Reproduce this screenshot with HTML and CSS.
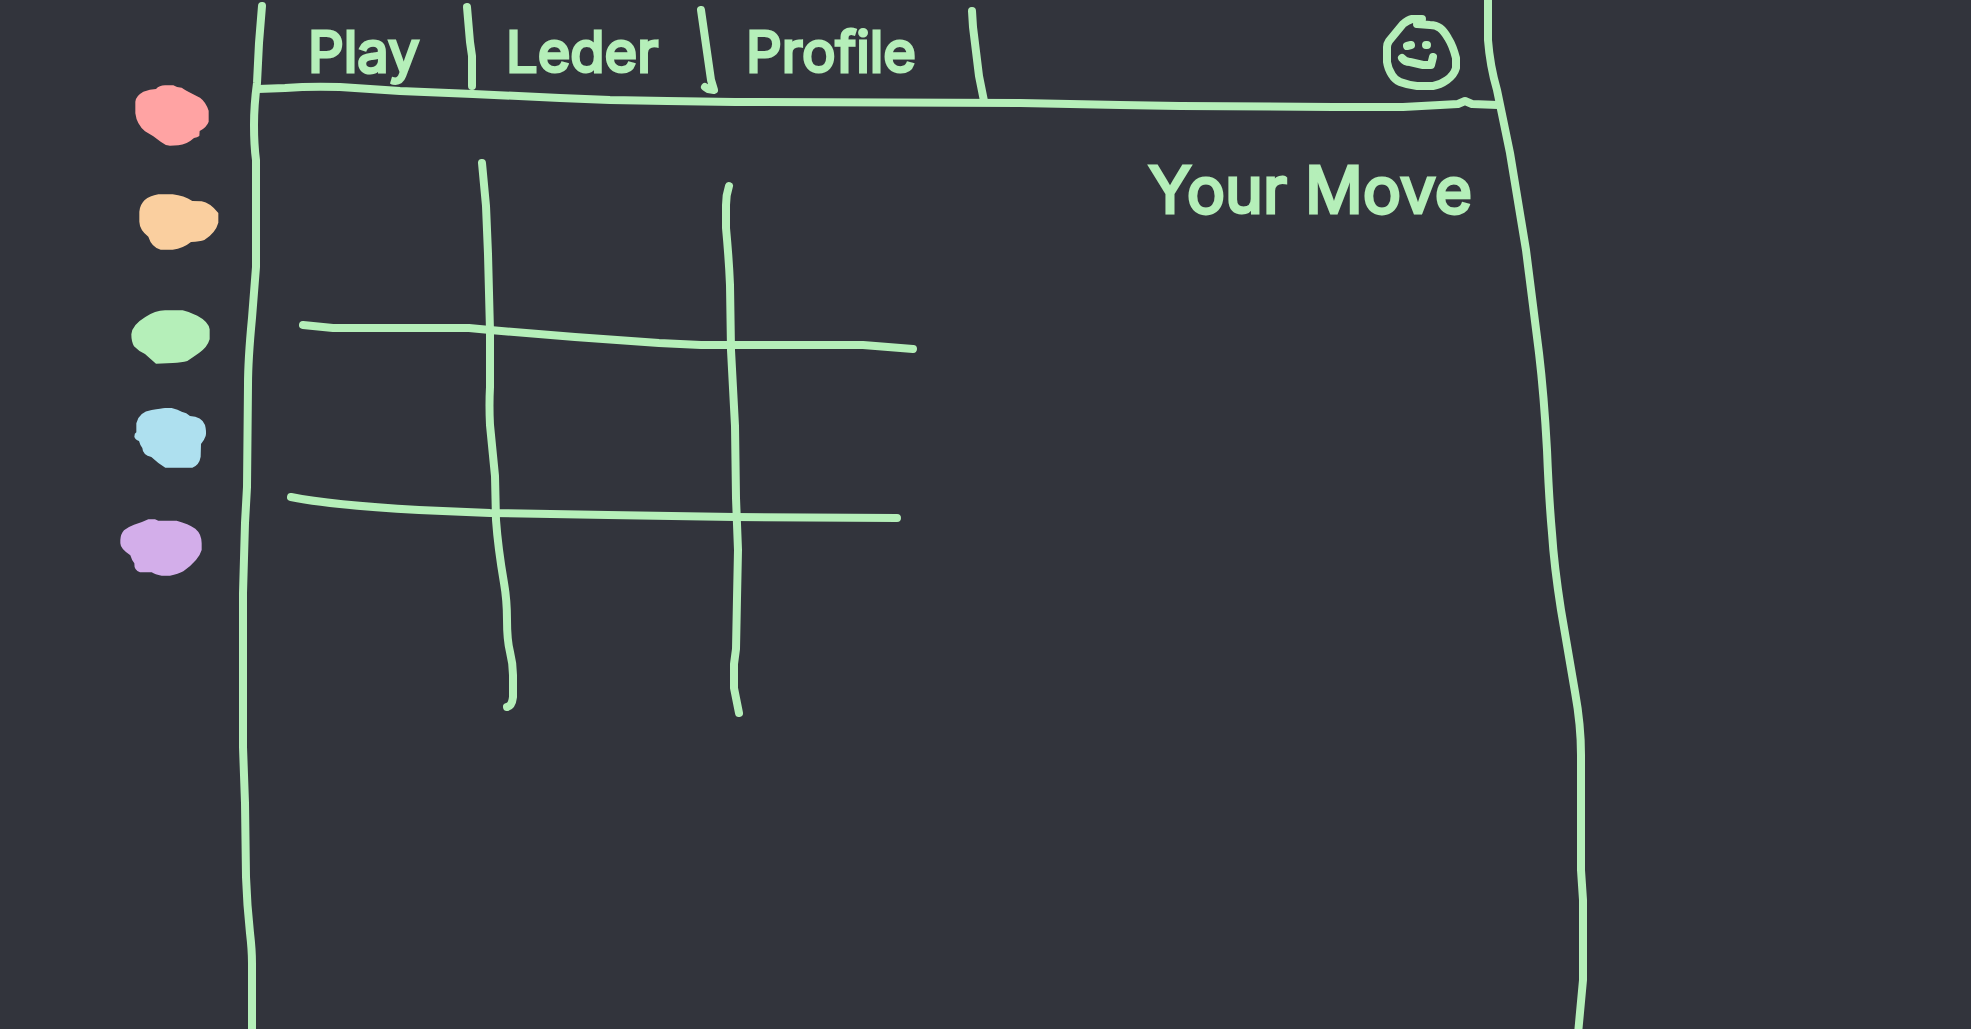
FILE: index.html
```html
<!DOCTYPE html>
<html lang="en">
<head>
<meta charset="utf-8">
<meta name="viewport" content="width=device-width, initial-scale=1">
<title>Tic-tac-toe</title>
<link rel="stylesheet" href="styles.css">
</head>
<body>
<div class="app">
  <aside class="palette" aria-label="Colours">
    <button class="swatch swatch-red" type="button" aria-label="Red">
      <svg viewBox="0 -30 360 330"><path d="M76 95Q77 78 100 65Q120 58 138 57Q148 46 165 46L190 46Q200 53 215 53Q225 60 235 65L270 83Q287 95 296 122L296 155Q290 172 269 183L268 198Q262 203 252 204Q230 224 205 226L180 227Q165 226 152 215L130 199L105 184Q80 163 76 130Z"/></svg>
    </button>
    <button class="swatch swatch-orange" type="button" aria-label="Orange">
      <svg viewBox="0 300 360 330"><path d="M88 425Q92 382 145 373L188 373Q222 377 247 393L275 394Q300 398 325 429L325 458Q317 488 283 510Q270 515 243 516Q220 535 188 539L152 539Q125 532 115 500Q89 480 88 455Z"/></svg>
    </button>
    <button class="swatch swatch-green" type="button" aria-label="Green">
      <svg viewBox="0 630 360 330"><path d="M64 793Q66 765 106 741Q135 722 165 721L218 721Q240 726 262 737Q296 755 299 778L299 808Q292 832 268 848Q248 862 232 873Q215 878 188 879L138 881Q125 870 105 852Q85 843 72 829Q64 815 64 793Z"/></svg>
    </button>
    <button class="swatch swatch-blue" type="button" aria-label="Blue">
      <svg viewBox="0 30 360 330"><path d="M79 130Q86 96 125 90Q155 85 165 84L185 84Q205 89 215 95Q230 98 240 108Q275 109 285 135Q290 155 287 168Q283 180 273 192L272 230Q268 255 247 263L166 263Q145 251 124 231Q98 225 97 204Q90 195 87 183Q75 178 73 170Q73 160 79 157Z"/></svg>
    </button>
    <button class="swatch swatch-purple" type="button" aria-label="Purple">
      <svg viewBox="0 360 360 330"><path d="M31 480Q32 462 42 451Q55 440 72 434Q95 428 115 418L135 418L145 422L200 422Q235 431 256 446Q275 462 275 490L275 510Q267 540 220 574Q205 582 180 587L155 587Q135 584 125 577L90 577Q72 572 73 550Q65 540 61 526Q31 506 31 490Z"/></svg>
    </button>
  </aside>

  <div class="frame">
    <svg class="outline" viewBox="236 0 1352 1029" preserveAspectRatio="none" aria-hidden="true">
      <path d="M262 6L259 43L257 83Q254 105 254 125Q254 145 256 160L256 267L252 318Q248 360 248 385L247 487L245 523L243 593L243 747L245 803L246 877Q247 905 250 933Q252 950 252 963L252 1034"/>
      <path d="M258 89L285 88Q310 86 340 87L400 91L473 94L560 98L610 100L667 101L735 102L1020 103L1120 105L1180 106L1333 107L1403 107L1440 105L1458 104L1465 101L1472 104L1498 105"/>
      <path d="M1488 -4L1488 40Q1490 66 1497 90L1510 153L1526 250L1539 353Q1544 395 1547 450Q1549 500 1552 533Q1554 565 1561 610L1575 692Q1581 725 1581 755L1581 870L1583 900L1583 980L1578 1034"/>
    </svg>

    <header class="header">
      <nav class="tabs">
        <a class="tab tab-play" href="#play">Play</a>
        <svg class="divider" viewBox="458 0 24 112" aria-hidden="true"><path d="M467 7L470 42L472 56L472 86"/></svg>
        <a class="tab tab-leader" href="#leader">Leder</a>
        <svg class="divider" viewBox="698 0 24 112" aria-hidden="true"><path d="M701 10L706 45L711 80L714 90L708 89L705 87"/></svg>
        <a class="tab tab-profile" href="#profile">Profile</a>
        <svg class="divider" viewBox="968 0 24 112" aria-hidden="true"><path d="M972 11L973 27L979 76L984 101"/></svg>
      </nav>
      <button class="avatar" type="button" aria-label="Account">
        <svg viewBox="1376 8 92 92">
          <path d="M1422 19L1412 19Q1408 20 1403 24L1389 41Q1387 44 1387 47L1387 62Q1388 69 1392 75Q1395 80 1400 82Q1408 85 1417 86L1433 86Q1440 85 1447 80Q1454 75 1456 68L1456 58Q1453 46 1448 38Q1444 31 1440 28Q1436 25 1430 25L1417 24"/>
          <path d="M1407 46L1411 45M1426 45L1427 45M1402 58Q1405 62 1410 62L1423 65L1431 65L1433 57"/>
        </svg>
      </button>
    </header>

    <main class="game">
      <svg class="board" viewBox="280 150 660 580" role="img" aria-label="Empty tic-tac-toe board">
        <path d="M482 163L486 206L488 254L490 331L490 387Q489 405 490 425L495 476L496 520Q498 548 504 583Q507 600 507 620Q507 640 510 652Q513 664 513 675L513 697Q512 706 507 707"/>
        <path d="M729 186Q726 195 726 205L726 228Q729 260 730 285L731 350L735 426L736 498L738 550L737 598L736 649L734 664L734 688L739 713"/>
        <path d="M303 325L333 328L469 328L490 330L575 337L659 343L701 345L863 345L913 349"/>
        <path d="M291 497Q330 505 419 510L490 513L608 515L735 517L897 518"/>
      </svg>
      <p class="status">Your Move</p>
    </main>
  </div>
</div>
</body>
</html>
```
FILE: styles.css
```css
:root {
  --ground: #32343c;
  --ink: #b5efb9;
}

* {
  box-sizing: border-box;
}

body {
  margin: 0;
  background: var(--ground);
  color: var(--ink);
  font-family: Inter, "Liberation Sans", sans-serif;
}

.app {
  display: grid;
  grid-template-columns: 236px minmax(0, 1352fr) minmax(0, 383fr);
  min-height: 100vh;
}

button {
  padding: 0;
  border: 0;
  background: none;
  color: inherit;
  cursor: pointer;
}

svg {
  display: block;
  fill: none;
  stroke: var(--ink);
  stroke-width: 8px;
  stroke-linecap: round;
  stroke-linejoin: round;
}

/* Colour picker */
.palette {
  display: flex;
  flex-direction: column;
  align-items: flex-end;
  padding: 60px 6px 0 0;
}

.swatch {
  width: 120px;
  height: 110px;
}

.swatch svg {
  width: 100%;
  height: 100%;
  stroke: none;
}

.swatch-red svg { fill: #ffa3a3; }
.swatch-orange svg { fill: #facf9f; }
.swatch-green svg { fill: #b5efb9; }
.swatch-blue svg { fill: #aee0ef; }
.swatch-purple svg { fill: #d3aeea; }

/* Hand-drawn window edge, stretched over the whole frame */
.frame {
  position: relative;
}

.outline {
  position: absolute;
  inset: 0;
  width: 100%;
  height: 100%;
  overflow: hidden;
  pointer-events: none;
}

.outline path {
  vector-effect: non-scaling-stroke;
}

/* Navigation */
.header {
  display: flex;
  justify-content: space-between;
  align-items: flex-start;
  height: 112px;
  padding: 0 120px 0 24px;
}

.tabs {
  display: flex;
}

.tab {
  padding-top: 20px;
  color: inherit;
  font-size: 56px;
  font-weight: 400;
  line-height: 64px;
  text-decoration: none;
  -webkit-text-stroke: 3px var(--ink);
  stroke-linejoin: round;
}

.tab-play {
  width: 198px;
  padding-left: 48px;
}

.tab-leader {
  width: 216px;
  padding-left: 24px;
}

.tab-profile {
  width: 246px;
  padding-left: 24px;
}

.divider {
  flex: none;
  width: 24px;
  height: 112px;
  overflow: visible;
}

.avatar {
  width: 92px;
  height: 92px;
  margin-top: 8px;
}

/* Game */
.game {
  display: flex;
  justify-content: space-between;
  align-items: flex-start;
  padding: 38px 116px 0 44px;
}

.board {
  flex: 0 1 660px;
  min-width: 0;
}

.status {
  margin: 0;
  font-size: 64px;
  font-weight: 400;
  line-height: 80px;
  white-space: nowrap;
  -webkit-text-stroke: 3px var(--ink);
  stroke-linejoin: round;
}
```
